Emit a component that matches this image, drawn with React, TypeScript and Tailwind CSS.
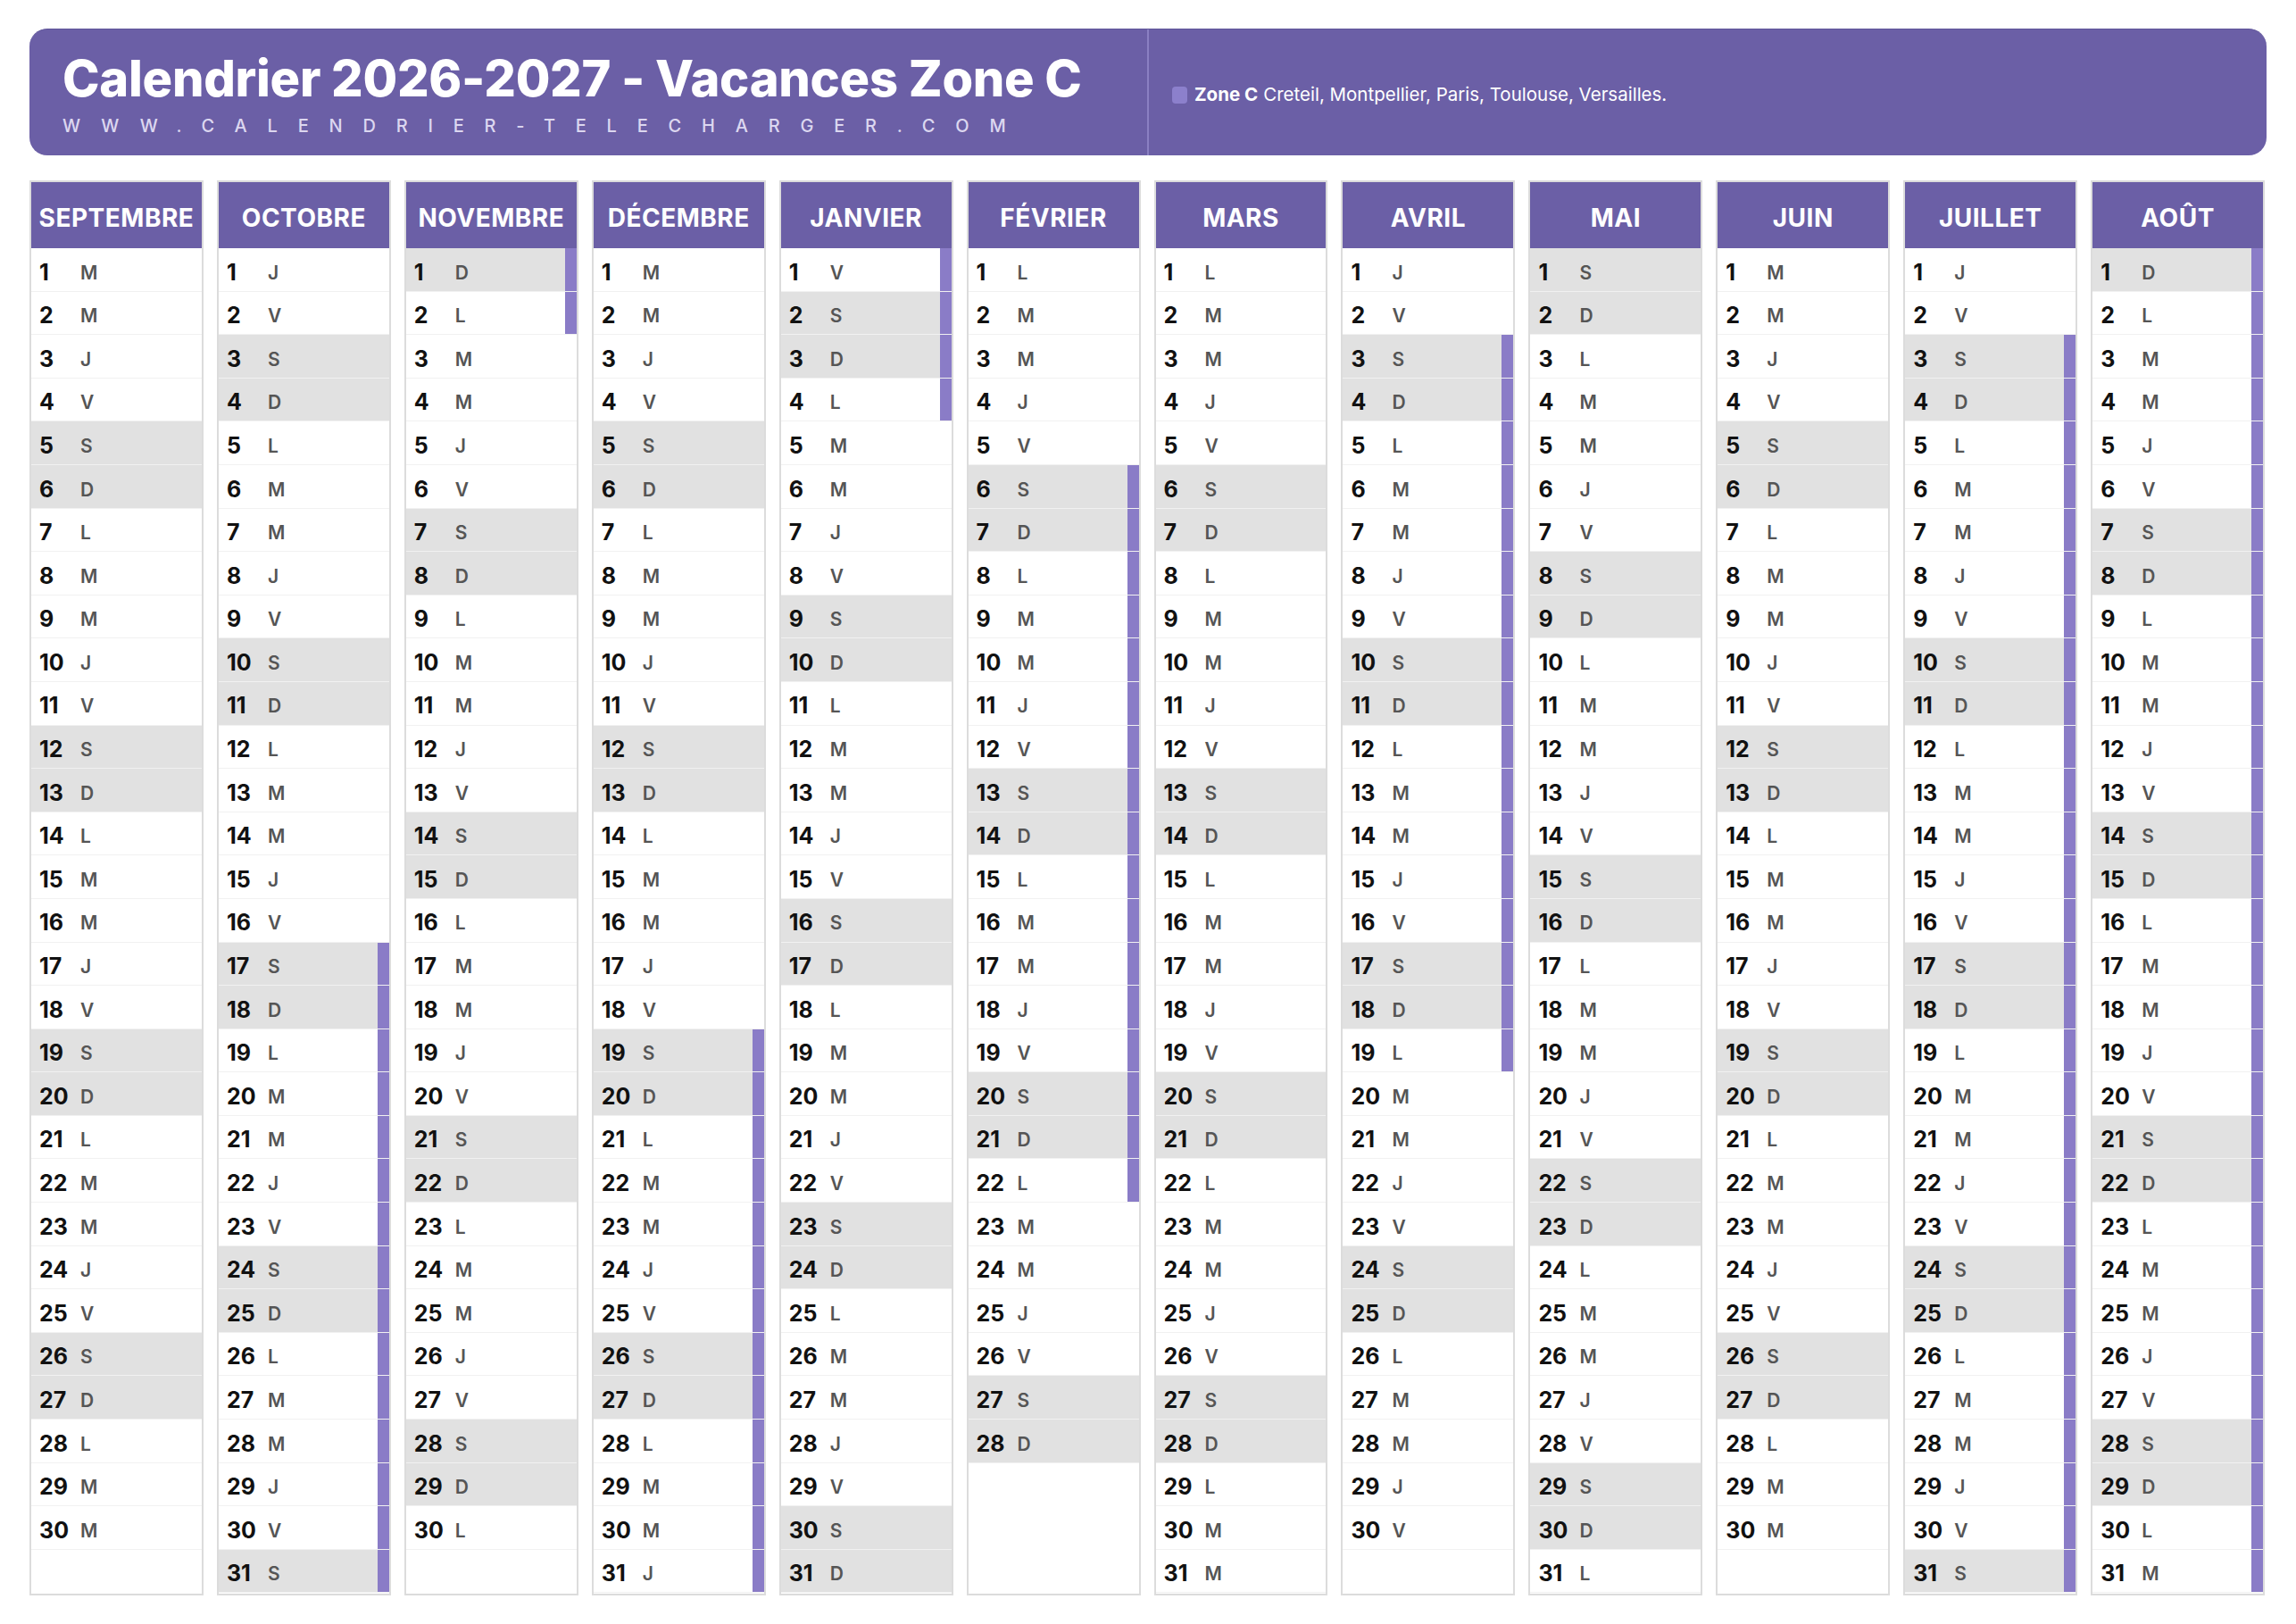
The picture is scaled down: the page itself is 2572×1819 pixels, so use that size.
import React from 'react';

const MONTHS = [
  { name: 'SEPTEMBRE', year: 2026, month: 8 },
  { name: 'OCTOBRE', year: 2026, month: 9 },
  { name: 'NOVEMBRE', year: 2026, month: 10 },
  { name: 'DÉCEMBRE', year: 2026, month: 11 },
  { name: 'JANVIER', year: 2027, month: 0 },
  { name: 'FÉVRIER', year: 2027, month: 1 },
  { name: 'MARS', year: 2027, month: 2 },
  { name: 'AVRIL', year: 2027, month: 3 },
  { name: 'MAI', year: 2027, month: 4 },
  { name: 'JUIN', year: 2027, month: 5 },
  { name: 'JUILLET', year: 2027, month: 6 },
  { name: 'AOÛT', year: 2027, month: 7 },
];

// vacances zone C : [mois, premier jour, dernier jour]
const HOLIDAYS: [number, number, number][] = [
  [2026 * 12 + 9, 17, 31],
  [2026 * 12 + 10, 1, 2],
  [2026 * 12 + 11, 19, 31],
  [2027 * 12 + 0, 1, 4],
  [2027 * 12 + 1, 6, 22],
  [2027 * 12 + 3, 3, 19],
  [2027 * 12 + 6, 3, 31],
  [2027 * 12 + 7, 1, 31],
];

const LETTERS = ['D', 'L', 'M', 'M', 'J', 'V', 'S'];

const isHoliday = (year: number, month: number, day: number) =>
  HOLIDAYS.some(([m, a, b]) => m === year * 12 + month && day >= a && day <= b);

const MonthColumn: React.FC<{ name: string; year: number; month: number }> = ({ name, year, month }) => {
  const count = new Date(year, month + 1, 0).getDate();
  const days = Array.from({ length: count }, (_, i) => i + 1);

  return (
    <div className="flex-1 flex flex-col border-2 border-[#dcdcdc] bg-white pb-[1px]">
      <div className="h-[74px] flex items-center justify-center pt-[5px] bg-[#6b5fa6] text-white text-[28px] font-bold tracking-[0.5px]">
        {name}
      </div>
      {days.map((d) => {
        const dow = new Date(year, month, d).getDay();
        const weekend = dow === 0 || dow === 6;
        const vac = isHoliday(year, month, d);
        return (
          <div
            key={d}
            className={`h-[48.6px] flex items-stretch border-b border-[#f1f1f1] ${weekend ? 'bg-[#e1e1e1]' : 'bg-white'}`}
          >
            <div className="w-[55px] pl-[9px] flex items-center pt-[7px] text-[25px] font-bold text-[#111]">{d}</div>
            <div className="flex-1 flex items-center pt-[7px] text-[21px] font-semibold text-[#555]">{LETTERS[dow]}</div>
            <div className={`w-[13px] ${vac ? 'bg-[#8a7cc7]' : ''}`} />
          </div>
        );
      })}
    </div>
  );
};

export default function App() {
  return (
    <div
      className="w-[2572px] h-[1819px] bg-white pt-[32px] px-[33px] flex flex-col"
      style={{ fontFamily: 'Inter, "Noto Sans", "Liberation Sans", sans-serif' }}
    >
      {/* Bandeau titre */}
      <div className="h-[142px] flex rounded-[20px] bg-[#6b5fa6] border-t border-[#5f5499]">
        <div className="w-[1252px] flex flex-col justify-center pl-[37px] pt-[2px]">
          <div className="text-white text-[56px] font-extrabold leading-[1.1] tracking-[-0.3px]">
            Calendrier 2026-2027 - Vacances Zone C
          </div>
          <div className="text-[#dcd7f0] text-[20px] font-medium tracking-[22.8px] mt-[11px] leading-none">
            WWW.CALENDRIER-TELECHARGER.COM
          </div>
        </div>
        <div className="w-[2px] bg-[#8a80c2]" />
        <div className="flex-1 flex items-center pl-[26px] pt-[6px]">
          <div className="w-[17px] h-[19px] rounded-[4px] bg-[#8c80cc] mr-[8px]" />
          <span className="text-white text-[20.5px] font-bold mr-[6px]">Zone C</span>
          <span className="text-white text-[20.5px]">Creteil, Montpellier, Paris, Toulouse, Versailles.</span>
        </div>
      </div>

      {/* Mois */}
      <div className="flex gap-[15px] mt-[28px] pr-[2px]">
        {MONTHS.map((m) => (
          <MonthColumn key={m.name} {...m} />
        ))}
      </div>
    </div>
  );
}
